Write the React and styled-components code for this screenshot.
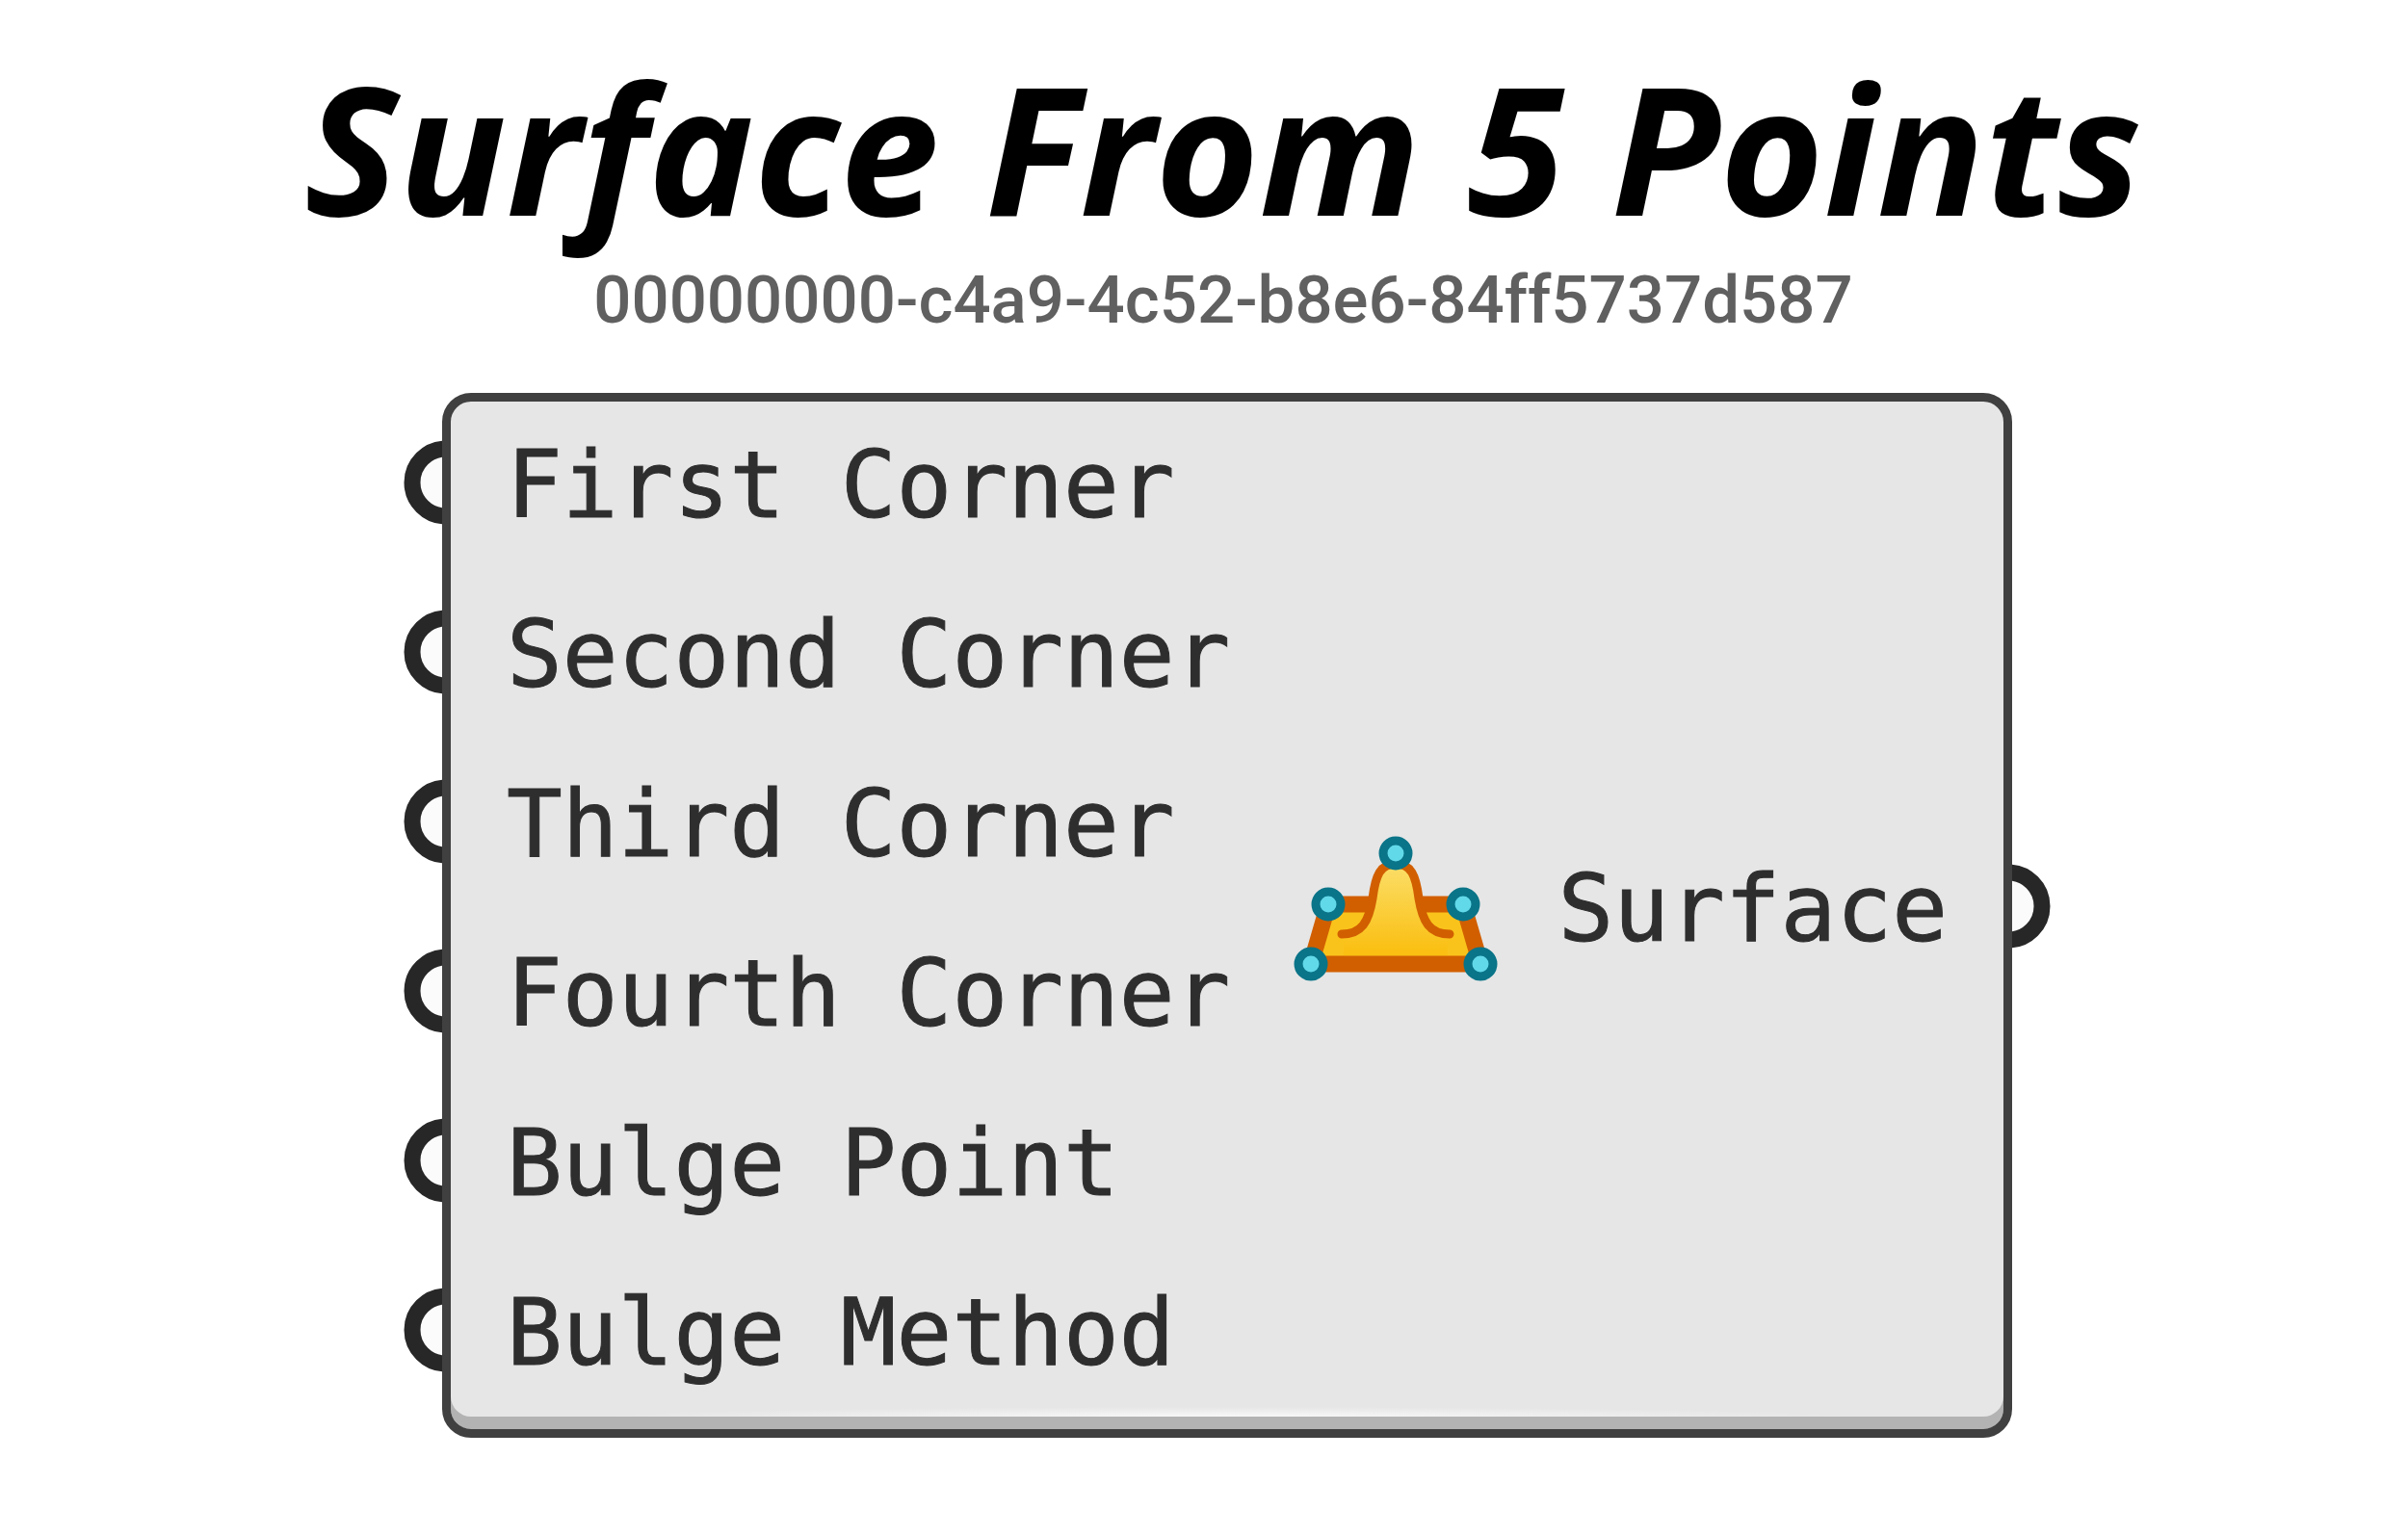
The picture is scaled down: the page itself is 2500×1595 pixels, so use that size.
import styled, {createGlobalStyle} from 'styled-components';


const GlobalStyle=createGlobalStyle`
body{
	margin:0;
	background:#ffffff;
}
`

const Page=styled.main`
display:flex;
flex-direction:column;
align-items:center;
padding:52px 0px 100px 48px;
`

const Header=styled.header`
display:flex;
flex-direction:column;
align-items:center;
gap:20px;
padding:0px 8px 56px 0px;
`

const Title=styled.h1`
margin:0;
font-family:"Open Sans","Noto Sans",sans-serif;
font-size:185px;
font-weight:700;
font-style:italic;
line-height:200px;
color:#000000;
white-space:nowrap;
`

const Guid=styled.p`
margin:0;
font-family:Roboto,sans-serif;
font-size:69px;
font-weight:500;
line-height:80px;
color:#606060;
white-space:nowrap;
`

const Node=styled.section`
display:flex;
align-items:stretch;
`

//one column of connectors on each side of the body
const Grips=styled.div`
display:flex;
flex-direction:column;
justify-content:${props=>props.$center?"center":"flex-start"};
gap:16px;
padding:13px 0px 32px;
`

const GripBox=styled.div`
display:flex;
align-items:center;
height:160px;
`

//grey lip at the bottom with a soft shine above it
const Body=styled.div`
box-sizing:border-box;
display:grid;
grid-template-columns:1fr auto auto;
align-items:center;
column-gap:60px;
width:65.2vw;
min-width:1600px;
padding:4px 58px 23px 58px;
border:9px solid #404040;
border-radius:30px;
background:radial-gradient(closest-side,#f8f8f8,#e6e6e6) center bottom 3px / 80% 20px no-repeat #e6e6e6;
box-shadow:inset 0px -13px 0px #b3b3b3;
`

const Params=styled.ul`
display:flex;
flex-direction:column;
gap:16px;
margin:0;
padding:0;
list-style:none;
`

const Param=styled.li`
box-sizing:border-box;
height:160px;
padding-top:6px;
font-family:"DejaVu Sans Mono",monospace;
font-size:96px;
line-height:154px;
color:#2e2e2e;
-webkit-text-stroke:1px #2e2e2e;
white-space:nowrap;
`

const inputs=["First Corner","Second Corner","Third Corner","Fourth Corner","Bulge Point","Bulge Method"]
const outputs=["Surface"]

//corners first, bulge point last
const points=[[20,138],[196,138],[38,76],[178,76],[108,23]]


function Grip({right}){
	return(
		<GripBox>
			<svg width="40" height="88" viewBox="0 0 40 88">
				<circle cx={right?-4:44} cy="44" r="35" fill="#fbfbfb" stroke="#272727" strokeWidth="17"/>
			</svg>
		</GripBox>)
}

function SurfaceIcon(){
	return(
		<svg width="216" height="156" viewBox="0 0 216 156">
			<defs>
				<linearGradient id="gold" gradientUnits="userSpaceOnUse" x1="0" y1="30" x2="0" y2="125">
					<stop offset="0" stopColor="#fbe06d"/>
					<stop offset="1" stopColor="#fabf12"/>
				</linearGradient>
			</defs>
			<path d="M20 138 L38 76 H178 L196 138 Z" fill="#fac31c" stroke="#d15f00" strokeWidth="17"/>
			<path d="M54 107 C74 107 82 96 85 71 C88 46 92 34 108 34 C124 34 128 46 131 71 C134 96 142 107 162 107 V129 H54 Z" fill="url(#gold)"/>
			<path d="M52 107 C73 107 80 94 84 70 C87 46 92 34 108 34 C124 34 129 46 132 70 C136 94 143 107 164 107" fill="none" stroke="#d15f00" strokeWidth="9" strokeLinecap="round"/>
			{points.map(([x,y])=><circle key={x+"-"+y} cx={x} cy={y} r="13" fill="#62d9e8" stroke="#0a7488" strokeWidth="9"/>)}
		</svg>)
}


export default function App(){

	return(
		<>
		<GlobalStyle/>
		<Page>
			<Header>
				<Title>Surface From 5 Points</Title>
				<Guid>00000000-c4a9-4c52-b8e6-84ff5737d587</Guid>
			</Header>
			<Node>
				<Grips>
					{inputs.map(name=><Grip key={name}/>)}
				</Grips>
				<Body>
					<Params>
						{inputs.map(name=><Param key={name}>{name}</Param>)}
					</Params>
					<SurfaceIcon/>
					<Params>
						{outputs.map(name=><Param key={name}>{name}</Param>)}
					</Params>
				</Body>
				<Grips $center>
					{outputs.map(name=><Grip key={name} right/>)}
				</Grips>
			</Node>
		</Page>
		</>)
}
